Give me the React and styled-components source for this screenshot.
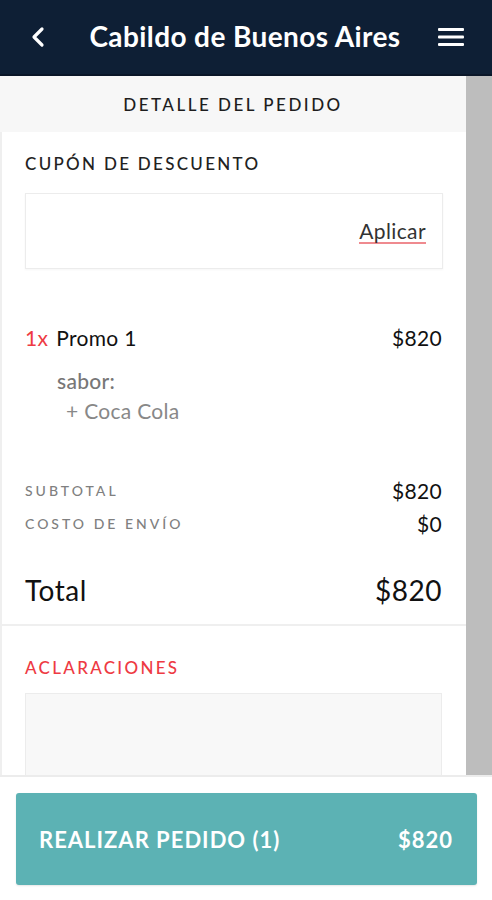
import React from "react";
import styled, { createGlobalStyle } from "styled-components";

const GlobalStyle = createGlobalStyle`
  html, body {
    margin: 0;
    padding: 0;
    background: #fff;
  }
  body {
    font-family: Lato, "Open Sans", "Liberation Sans", sans-serif;
    color: #1b1b1b;
  }
`;

const item = {
  qty: 1,
  name: "Promo 1",
  price: 820,
  options: [{ label: "sabor:", values: ["Coca Cola"] }],
};

const App = () => {
  return (
    <Page>
      <GlobalStyle />
      <Header>
        <IconButton aria-label="volver">
          <svg width="16" height="22" viewBox="0 0 16 22">
            <path
              d="M12 3 L4 11 L12 19"
              fill="none"
              stroke="#fff"
              strokeWidth="3.2"
              strokeLinecap="round"
              strokeLinejoin="round"
            />
          </svg>
        </IconButton>
        <Title>Cabildo de Buenos Aires</Title>
        <IconButton aria-label="menu">
          <svg width="26" height="20" viewBox="0 0 26 20">
            <rect x="0" y="1" width="26" height="3" rx="1" fill="#fff" />
            <rect x="0" y="8.5" width="26" height="3" rx="1" fill="#fff" />
            <rect x="0" y="16" width="26" height="3" rx="1" fill="#fff" />
          </svg>
        </IconButton>
      </Header>

      <Main>
        <Content>
          <SubHeader>DETALLE DEL PEDIDO</SubHeader>
          <Card>
            <Section>
              <SectionTitle>CUPÓN DE DESCUENTO</SectionTitle>
              <CouponBox>
                <ApplyLink>Aplicar</ApplyLink>
              </CouponBox>
            </Section>

            <ItemBlock>
              <ItemRow>
                <ItemName>
                  <Qty>{item.qty}x</Qty>
                  {item.name}
                </ItemName>
                <Price>${item.price}</Price>
              </ItemRow>
              {item.options.map((opt) => (
                <OptionGroup key={opt.label}>
                  <OptionLabel>{opt.label}</OptionLabel>
                  {opt.values.map((v) => (
                    <OptionValue key={v}>+ {v}</OptionValue>
                  ))}
                </OptionGroup>
              ))}
            </ItemBlock>

            <Totals>
              <SummaryRow>
                <SummaryLabel>SUBTOTAL</SummaryLabel>
                <Price>$820</Price>
              </SummaryRow>
              <SummaryRow>
                <SummaryLabel>COSTO DE ENVÍO</SummaryLabel>
                <Price>$0</Price>
              </SummaryRow>
              <TotalRow>
                <span>Total</span>
                <TotalAmount>$820</TotalAmount>
              </TotalRow>
            </Totals>

            <Notes>
              <SectionTitle $accent>ACLARACIONES</SectionTitle>
              <NotesBox />
            </Notes>
          </Card>
        </Content>
        <ScrollTrack />
      </Main>

      <Footer>
        <OrderButton>
          <span>REALIZAR PEDIDO (1)</span>
          <span>$820</span>
        </OrderButton>
      </Footer>
    </Page>
  );
};

const Page = styled.div`
  height: 900px;
  display: flex;
  flex-direction: column;
  overflow: hidden;
`;

const Header = styled.header`
  height: 76px;
  flex-shrink: 0;
  box-sizing: border-box;
  background: #0e1f35;
  border-bottom: 2px solid #0a1628;
  display: flex;
  align-items: center;
  justify-content: space-between;
  padding: 0 28px 0 30px;
`;

const IconButton = styled.button`
  background: none;
  border: none;
  padding: 0;
  display: flex;
  align-items: center;
  justify-content: center;
  cursor: pointer;
`;

const Title = styled.h1`
  margin: 0 0 3px 6px;
  color: #fff;
  font-size: 28px;
  font-weight: 700;
  letter-spacing: 0.4px;
`;

const Main = styled.div`
  flex: 1;
  display: flex;
  min-height: 0;
  overflow: hidden;
`;

const Content = styled.div`
  flex: 1;
  min-width: 0;
  display: flex;
  flex-direction: column;
`;

const ScrollTrack = styled.div`
  width: 26px;
  flex-shrink: 0;
  background: #bdbdbd;
`;

const SubHeader = styled.div`
  height: 56px;
  flex-shrink: 0;
  background: #f7f7f7;
  display: flex;
  align-items: center;
  justify-content: center;
  font-size: 17px;
  font-weight: 500;
  letter-spacing: 2.5px;
  color: #1e1e1e;
`;

const Card = styled.div`
  flex: 1;
  background: #fff;
  border-left: 2px solid #efefef;
`;

const Section = styled.section`
  padding: 21px 23px 0 23px;
`;

const SectionTitle = styled.h2`
  margin: 0;
  font-size: 17px;
  font-weight: 500;
  letter-spacing: 2.3px;
  color: ${(p) => (p.$accent ? "#ee3a43" : "#222")};
  line-height: 22px;
`;

const CouponBox = styled.div`
  margin-top: 18px;
  height: 76px;
  box-sizing: border-box;
  border: 1px solid #ececec;
  box-shadow: 0 1px 2px rgba(0, 0, 0, 0.04);
  display: flex;
  align-items: center;
  justify-content: flex-end;
  padding: 2px 16px 0 0;
`;

const ApplyLink = styled.span`
  font-size: 21px;
  letter-spacing: 0.4px;
  color: #333;
  border-bottom: 2px solid #ef8a8f;
  line-height: 21px;
  padding-bottom: 1px;
`;

const ItemBlock = styled.div`
  padding: 56px 24px 0 23px;
`;

const ItemRow = styled.div`
  display: flex;
  justify-content: space-between;
  align-items: baseline;
  font-size: 21px;
  letter-spacing: 0.3px;
`;

const ItemName = styled.span`
  color: #111;
`;

const Qty = styled.span`
  color: #ee3a43;
  margin-right: 8px;
`;

const Price = styled.span`
  font-size: 21px;
  letter-spacing: 0.3px;
  color: #111;
`;

const OptionGroup = styled.div`
  padding: 16px 0 0 32px;
  font-size: 21px;
  letter-spacing: 0.3px;
  line-height: 30px;
  color: #777;
`;

const OptionLabel = styled.div`
  font-weight: 500;
`;

const OptionValue = styled.div`
  padding-left: 9px;
  color: #888;
`;

const Totals = styled.div`
  padding: 48px 24px 17px 23px;
  border-bottom: 2px solid #efefef;
`;

const SummaryRow = styled.div`
  display: flex;
  justify-content: space-between;
  align-items: center;
  height: 33px;
`;

const SummaryLabel = styled.span`
  font-size: 14px;
  font-weight: 500;
  letter-spacing: 3px;
  color: #808080;
`;

const TotalRow = styled.div`
  display: flex;
  justify-content: space-between;
  align-items: center;
  margin-top: 33px;
  font-size: 28px;
  letter-spacing: 0.5px;
  color: #111;
`;

const TotalAmount = styled.span`
  font-size: 28px;
`;

const Notes = styled.section`
  padding: 31px 24px 0 23px;
`;

const NotesBox = styled.div`
  margin-top: 14px;
  height: 120px;
  background: #f8f8f8;
  border: 1px solid #ececec;
`;

const Footer = styled.footer`
  height: 125px;
  flex-shrink: 0;
  box-sizing: border-box;
  border-top: 2px solid #ececec;
  background: #fff;
  padding: 16px 15px 0 16px;
`;

const OrderButton = styled.button`
  width: 100%;
  height: 92px;
  border: none;
  border-radius: 3px;
  background: #5cb2b4;
  color: #fff;
  font-family: inherit;
  font-size: 22px;
  font-weight: 700;
  letter-spacing: 1px;
  display: flex;
  align-items: center;
  justify-content: space-between;
  padding: 0 24px 0 23px;
  cursor: pointer;
  box-shadow: 0 1px 2px rgba(0, 0, 0, 0.1);
`;

export default App;
